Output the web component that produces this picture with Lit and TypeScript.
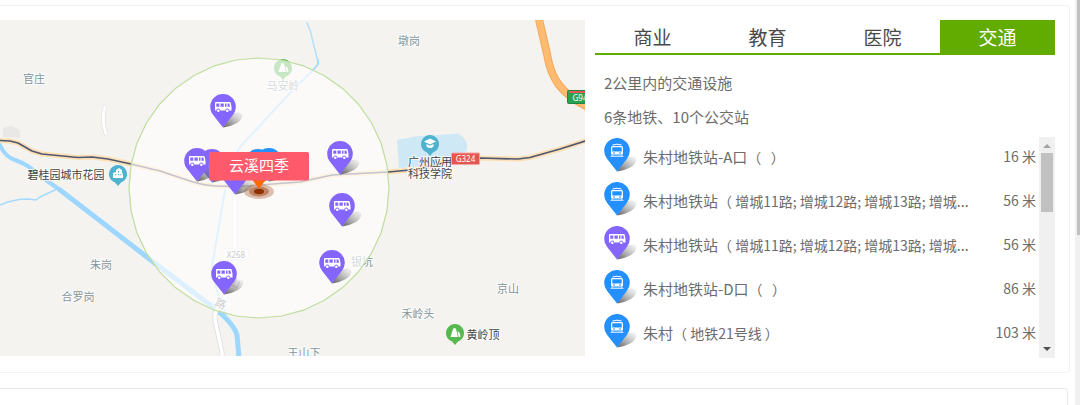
import { LitElement, html, svg, css } from "lit";
import { customElement, property, state } from "lit/decorators.js";

type Kind = "bus" | "metro";

interface Stop {
  kind: Kind;
  name: string;
  detail: string;
  metres: number;
}

const TABS = ["商业", "教育", "医院", "交通"];

const STOPS: Stop[] = [
  { kind: "metro", name: "朱村地铁站-A口", detail: "（\u00a0\u00a0\u00a0）", metres: 16 },
  { kind: "metro", name: "朱村地铁站", detail: "（ 增城11路; 增城12路; 增城13路; 增城...", metres: 56 },
  { kind: "bus", name: "朱村地铁站", detail: "（ 增城11路; 增城12路; 增城13路; 增城...", metres: 56 },
  { kind: "metro", name: "朱村地铁站-D口", detail: "（\u00a0\u00a0\u00a0）", metres: 86 },
  { kind: "metro", name: "朱村", detail: "（ 地铁21号线 ）", metres: 103 },
];

const MAP_PINS: { kind: Kind; x: number; y: number }[] = [
  { kind: "bus", x: 199, y: 149 },
  { kind: "bus", x: 210, y: 94 },
  { kind: "bus", x: 184, y: 148 },
  { kind: "bus", x: 222, y: 161 },
  { kind: "metro", x: 245, y: 149 },
  { kind: "metro", x: 256, y: 148 },
  { kind: "bus", x: 327, y: 141 },
  { kind: "bus", x: 329, y: 193 },
  { kind: "bus", x: 319, y: 250 },
  { kind: "bus", x: 211, y: 261 },
];

const VILLAGES = [
  { x: 34, y: 83, text: "官庄" },
  { x: 409, y: 45, text: "墩岗" },
  { x: 283, y: 90, text: "马安岭" },
  { x: 101, y: 269, text: "朱岗" },
  { x: 78, y: 301, text: "合罗岗" },
  { x: 304, y: 357, text: "王山下" },
  { x: 362, y: 266, text: "银坑" },
  { x: 508, y: 293, text: "京山" },
  { x: 418, y: 318, text: "禾岭头" },
];

const pinShadow = svg`
  <linearGradient id="shade" x1="0" y1="1" x2="1" y2="0">
    <stop offset="0" stop-color="#222" stop-opacity=".75"></stop>
    <stop offset=".5" stop-color="#666" stop-opacity=".45"></stop>
    <stop offset="1" stop-color="#aaa" stop-opacity=".1"></stop>
  </linearGradient>`;

const busGlyph = svg`
  <path fill="#fff" fill-rule="evenodd" d="M6 8H19.600Q20.600 8 20.800 9L21.500 13V16.500H19.300A2 2 0 0 0 15.300 16.500H10.300A2 2 0 0 0 6.300 16.500H5V9Q5 8 6 8ZM6.300 9.500V12.700H9.300V9.500ZM10.500 9.500V12.700H13.800V9.500ZM15 9.500V12.700H16.500V9.500ZM17.500 9.500V12.700H20L19.400 9.500Z"></path>
  <circle cx="8.300" cy="16.800" r="1.300" fill="#fff"></circle>
  <circle cx="17.300" cy="16.800" r="1.300" fill="#fff"></circle>`;

const metroGlyph = svg`
  <path fill="none" stroke="#fff" stroke-width="1" d="M8.500 7Q13 5.400 17.500 7"></path>
  <path fill="#fff" fill-rule="evenodd" d="M8.500 8H17.500Q19 8 19 9.500V15.500Q19 16.500 18 16.500H8Q7 16.500 7 15.500V9.500Q7 8 8.500 8ZM8.300 9.300V13.600H17.700V9.300ZM9 14.500V15.500H11V14.500ZM15 14.500V15.500H17V14.500Z"></path>
  <path fill="none" stroke="#fff" stroke-width="1" d="M8.800 16.500L6.800 19M17.200 16.500L19.200 19M8 18.200H18"></path>`;

const pinArt = (kind: Kind) => svg`
  <path fill="url(#shade)" d="M13 33.500L22 20Q29 17 32 20Q34 24 27 29Q21 32.500 13 33.500Z"></path>
  <path fill=${kind === "bus" ? "#8466ff" : "#2490ff"} d="M13 33.500L3.200 21A12.800 12.800 0 1 1 22.800 21Z"></path>
  ${kind === "bus" ? busGlyph : metroGlyph}`;

const ring = Array.from({ length: 36 }, (_, i) => {
  const a = (i * Math.PI) / 18;
  return `${(259 + 130 * Math.sin(a)).toFixed(1)},${(188 - 130 * Math.cos(a)).toFixed(1)}`;
}).join(" ");

const ROAD =
  "M0 140.500L10 141L18 143L32 151L42 154L78 157.500L92 157L108 159L131 164L160 171L184 179Q200 185 216 186Q238 187 260 185L300 182L332 175L350 174L388 172L416 169.500L460 159L480 158L518 159L530 157.500L560 149L585 141";

const HIGHWAY = "M538 15L547 54Q550 73 559 85Q570 99 590 108";

@customElement("stop-pin")
export class StopPin extends LitElement {
  @property() kind: Kind = "metro";

  static styles = css`
    :host {
      display: block;
      flex: none;
      width: 34px;
      height: 34px;
    }
    .pin {
      display: block;
      width: 100%;
      height: 100%;
    }
  `;

  render() {
    return html`<svg class="pin" viewBox="0 0 34 34" aria-hidden="true">
      <defs>${pinShadow}</defs>
      ${pinArt(this.kind)}
    </svg>`;
  }
}

@customElement("area-map")
export class AreaMap extends LitElement {
  static styles = css`
    :host {
      display: block;
      height: 336px;
      background: #f4f3ef;
    }
    .map {
      display: block;
      width: 100%;
      height: 100%;
      font-family: "Noto Sans CJK SC", sans-serif;
      font-size: 11px;
      font-weight: 400;
      text-anchor: middle;
    }
    .halo {
      paint-order: stroke;
      stroke: #fff;
      stroke-width: 2px;
      stroke-opacity: 0.8;
    }
    .village {
      fill: #83959b;
    }
    .poi {
      fill: #444;
    }
    .road-no {
      font-family: "Noto Sans", sans-serif;
      font-size: 8px;
      fill: #fff;
    }
    .grey {
      fill: #666;
    }
    .title {
      font-size: 15px;
      fill: #fff;
    }
    .line {
      fill: none;
      stroke-linejoin: round;
      stroke-linecap: round;
    }
  `;

  private marker(x: number, y: number, color: string, glyph: unknown) {
    return svg`<g transform="translate(${x} ${y})">
      <path fill=${color} d="M0 12L-3 8.500A9 9 0 1 1 3 8.500Z"></path>${glyph}
    </g>`;
  }

  render() {
    const hills = svg`<path fill="#fff" d="M-4.500 4L-2 -4Q-.5 -6 1 -4L3 4ZM3.800 4L2.400 -1Q3.500 -2.500 5 1L5.500 4Z"></path>`;
    const house = svg`<path fill="#fff" fill-rule="evenodd" d="M-5 4V-1L-2 -2V-4L1 -6L4 -4V-1L5 0V4ZM-3 0V1.300H-1.800V0ZM0 -3V-1.500H1.200V-3ZM0 0V1.300H1.200V0ZM2.400 0V1.300H3.500V0Z"></path>`;
    const cap = svg`<path fill="#fff" d="M0 -5.500L6 -2.500L0 .5L-6 -2.500ZM-3.500 0L0 1.800L3.500 0V2.500Q0 5.500 -3.500 2.500Z"></path>`;
    return html`<svg class="map" viewBox="0 20 585 336" preserveAspectRatio="xMidYMid slice" role="img" aria-label="云溪四季周边地图">
      <defs>${pinShadow}</defs>
      <path fill="#e9e8e6" d="M3 128L12 126L20 130V138L3 137Z"></path>
      <path fill="#cfe8f6" d="M397 140L418 136L440 135L458 133.5L463 137L467 143V151L450 158L430 166L399 168Z"></path>
      <path class="line" stroke="#dcdcda" stroke-width="4" d="M105 107Q101 120 106 134"></path>
      <path class="line" stroke="#fff" stroke-width="3" d="M105 107Q101 120 106 134"></path>
      <path class="line" stroke="#9dd7ff" stroke-width="4" d="M0 145Q5 157 15 160Q29 165 36 173L60 190"></path>
      <path class="line" stroke="#9dd7ff" stroke-width="5" d="M60 190L90 213L152 261L205 301Q233 321 237 335L239 358"></path>
      <path class="line" stroke="#a6dafd" stroke-width="1.500" d="M0 205Q14 199 28 199L36 200L40 197L57 189"></path>
      <path class="line" stroke="#b4dffb" stroke-width="1.500" d="M307 23L310 30L318 62"></path>
      <path class="line" stroke="#a9dcff" stroke-width="2" d="M318 60V64L315 68L290 93L240 147Q228 165 225 190L212 266Q214 285 222 306L226 316"></path>
      <path class="line" stroke="#ddd" stroke-width="5" d="M235 186V265L230 290L215 313V320L222 352V358"></path>
      <path class="line" stroke="#fff" stroke-width="3.500" d="M235 186V265L230 290L215 313V320L222 352V358"></path>
      <path class="line" stroke="#f5a85a" stroke-width="8" d=${HIGHWAY}></path>
      <path class="line" stroke="#ffbb70" stroke-width="6" d=${HIGHWAY}></path>
      <path class="line" stroke="#fce0b4" stroke-width="5" d=${ROAD}></path>
      <path class="line" stroke="#505774" stroke-width="1.700" d=${ROAD}></path>
      <rect x="223" y="249" width="25" height="11" rx="1" fill="#fff" stroke="#ccc" stroke-width=".5"></rect>
      <text class="road-no grey" x="236" y="258">X268</text>
      <text class="halo grey" transform="translate(233 286) rotate(25)">山</text>
      <text class="halo grey" transform="translate(219 307) rotate(25)">路</text>
      ${VILLAGES.map((v) => svg`<text class="halo village" x=${v.x} y=${v.y}>${v.text}</text>`)}
      ${this.marker(283, 68, "#5cb955", hills)}
      <polygon points=${ring} fill="#fffefd" fill-opacity=".66" stroke="#bfdd9c" stroke-width="1.200"></polygon>

      ${this.marker(118, 174, "#4fb3cf", house)}
      <text class="halo poi" x="66" y="179">碧桂园城市花园</text>
      ${this.marker(430, 144, "#4fb3cf", cap)}
      <text class="halo poi" x="430" y="166">广州应用</text>
      <text class="halo poi" x="430" y="178">科技学院</text>
      ${this.marker(455, 333, "#57b84f", hills)}
      <text class="halo poi" x="483" y="339">黄岭顶</text>

      <rect x="451.500" y="153" width="28" height="11.500" rx="1" fill="#e65752" stroke="#f4a5a0"></rect>
      <text class="road-no" x="465.500" y="162">G324</text>
      <rect x="567.500" y="90.500" width="28" height="13" rx="1" fill="#2aa052" stroke="#1e8743"></rect>
      <rect x="569" y="91" width="20" height="2" fill="#e65752"></rect>
      <text class="road-no" x="580" y="101">G94</text>

      ${MAP_PINS.map((p) => svg`<g transform="translate(${p.x} ${p.y})">${pinArt(p.kind)}</g>`)}
      <ellipse cx="259" cy="191.500" rx="15" ry="7.500" fill="#a0481a" fill-opacity=".32"></ellipse>
      <ellipse cx="259" cy="191.500" rx="10" ry="5" fill="#a0481a" fill-opacity=".5"></ellipse>
      <ellipse cx="259" cy="191.500" rx="5" ry="2.800" fill="#8f3000"></ellipse>
      <path fill="#ff6a00" d="M249 176H269L259 188.500Z"></path>
      <rect x="209" y="152" width="100" height="28.500" rx="2" fill="#ff5a6c"></rect>
      <text class="title" x="259" y="171">云溪四季</text>
    </svg>`;
  }
}

@customElement("app-root")
export class AppRoot extends LitElement {
  @state() private tab = "交通";

  static styles = css`
    :host {
      display: flex;
      height: 100vh;
      overflow: hidden;
      background: #fff;
      color: #6c6c6c;
      font-family: "Noto Sans CJK SC", sans-serif;
      font-weight: 400;
      font-size: 15px;
    }
    .page {
      flex: 1;
      min-width: 0;
      display: flex;
      flex-direction: column;
      gap: 15px;
      padding: 5px 5px 0 0;
    }
    .card {
      display: flex;
      gap: 10px;
      padding: 14px 14px 14px 0;
      border: 1px solid #f2f2f2;
      border-left: 0;
      border-radius: 0 4px 4px 0;
    }
    .next {
      flex: 1;
      margin-right: 2px;
      border-color: #e8e8e8;
      border-bottom: 0;
      border-radius: 0 4px 0 0;
    }
    .where {
      flex: 1;
      min-width: 0;
    }
    .panel {
      flex: none;
      width: 460px;
    }
    .tabs {
      display: grid;
      grid-template-columns: repeat(4, 1fr);
      border-bottom: 2px solid #62ab00;
    }
    .tab {
      height: 33px;
      padding: 0;
      border: 0;
      background: none;
      color: #4a4a4a;
      font: inherit;
      font-size: 19px;
      line-height: 33px;
      cursor: pointer;
    }
    .tab[aria-selected="true"] {
      background: #62ab00;
      color: #fff;
    }
    .info {
      padding: 11px 0 3px 9px;
    }
    .note {
      margin: 0;
      line-height: 34px;
    }
    .list {
      display: flex;
      height: 221px;
      padding-left: 9px;
    }
    .stops {
      flex: 1;
      min-width: 0;
      margin: 0;
      padding: 0;
      list-style: none;
      overflow: hidden;
    }
    .stop {
      display: flex;
      gap: 5px;
      height: 43px;
      padding: 1px 3px 0 0;
      line-height: 37px;
      white-space: nowrap;
    }
    .name {
      flex: 1;
      min-width: 0;
      overflow: hidden;
      text-overflow: ellipsis;
    }
    .lines,
    .metres {
      font-size: 14px;
    }
    .bar {
      flex: none;
      width: 16px;
      display: flex;
      flex-direction: column;
      align-items: center;
      background: #f0f0f0;
    }
    .arrow {
      display: block;
      width: 16px;
      height: 16px;
      fill: #a3a3a3;
    }
    .down {
      margin-top: auto;
      fill: #505050;
    }
    .thumb {
      width: 12px;
      height: 59px;
      background: #c1c1c1;
    }
    .page-bar {
      flex: none;
      width: 5px;
      display: flex;
      justify-content: flex-end;
      background: #f0f0f0;
    }
    .page-thumb {
      width: 3px;
      height: 58%;
      background: #c1c1c1;
    }
  `;

  render() {
    return html`
      <main class="page">
        <section class="card">
          <area-map class="where"></area-map>
          <div class="panel">
            <div class="tabs" role="tablist">
              ${TABS.map(
                (t) => html`<button class="tab" role="tab" aria-selected=${String(t === this.tab)} @click=${() => (this.tab = t)}>${t}</button>`
              )}
            </div>
            <div class="info">
              <p class="note">2公里内的交通设施</p>
              <p class="note">6条地铁、10个公交站</p>
            </div>
            <div class="list">
              <ul class="stops">
                ${STOPS.map(
                  (s) => html`<li class="stop">
                    <stop-pin .kind=${s.kind}></stop-pin>
                    <span class="name">${s.name}<span class="lines">${s.detail}</span></span>
                    <span class="metres">${s.metres} 米</span>
                  </li>`
                )}
              </ul>
              <div class="bar" aria-hidden="true">
                <svg class="arrow" viewBox="0 0 16 16"><path d="M4 11L8 7L12 11Z"></path></svg>
                <div class="thumb"></div>
                <svg class="arrow down" viewBox="0 0 16 16"><path d="M4 5L8 9L12 5Z"></path></svg>
              </div>
            </div>
          </div>
        </section>
        <section class="card next"></section>
      </main>
      <div class="page-bar" aria-hidden="true"><div class="page-thumb"></div></div>
    `;
  }
}
